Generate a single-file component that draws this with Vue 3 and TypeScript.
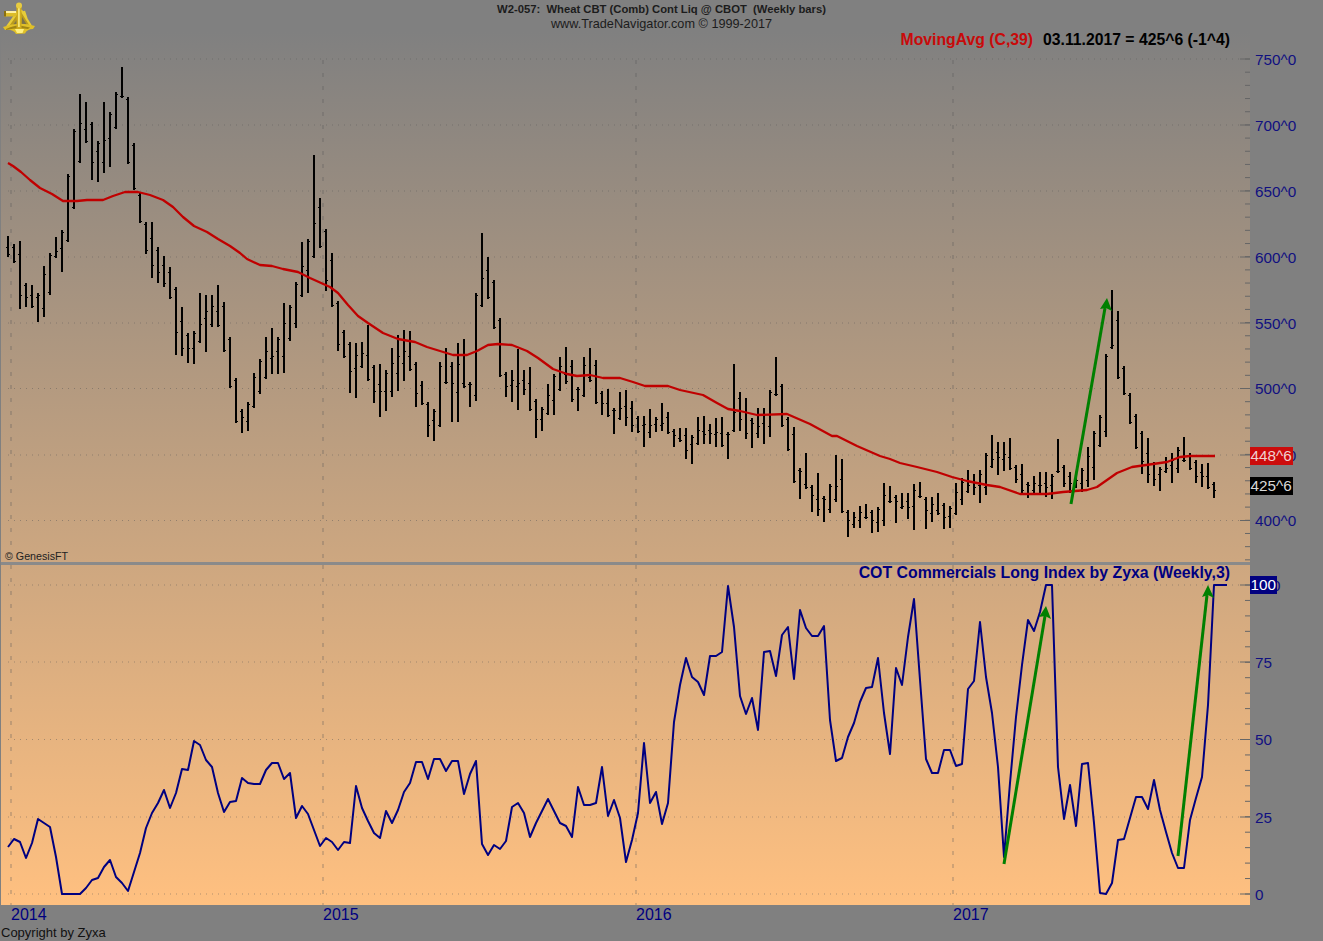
<script setup lang="ts">
// weekly bars as [high, low] in screen px, one bar every 6px from x=8
const bars: [number, number][] = [
  [236,257],[244,263],[241,309],[283,307],[285,308],[293,322],[266,317],[253,295],[237,258],[230,272],
  [174,242],[129,209],[94,163],[102,143],[122,180],[141,182],[102,173],[112,167],[92,129],[67,98],
  [97,164],[143,190],[193,223],[222,254],[222,278],[247,283],[256,287],[267,299],[287,355],[307,356],
  [333,363],[331,364],[293,343],[295,352],[295,327],[285,327],[302,352],[337,388],[378,423],[409,433],
  [402,431],[373,408],[359,394],[337,379],[328,374],[337,374],[303,373],[305,341],[282,328],[242,297],
  [239,293],[155,258],[198,248],[229,291],[253,307],[301,351],[330,358],[342,393],[343,398],[342,368],
  [325,381],[365,403],[364,417],[370,411],[348,397],[335,391],[330,381],[331,371],[362,407],[381,405],
  [402,437],[409,441],[362,427],[348,384],[362,422],[343,422],[339,388],[382,407],[293,401],[233,307],
  [257,299],[280,329],[318,377],[372,397],[370,402],[349,410],[370,395],[367,411],[399,438],[407,431],
  [384,415],[374,415],[357,391],[347,384],[360,402],[387,411],[357,397],[348,382],[360,404],[391,415],
  [389,417],[408,434],[392,420],[390,426],[401,432],[416,433],[416,447],[409,438],[417,432],[403,431],
  [412,434],[429,447],[428,442],[428,459],[435,464],[417,445],[416,444],[424,444],[418,447],[417,447],
  [432,459],[364,432],[392,431],[398,439],[418,448],[408,438],[408,444],[390,437],[357,396],[384,427],
  [417,451],[427,483],[468,499],[453,489],[485,512],[473,516],[496,522],[484,513],[455,502],[459,513],
  [510,537],[512,528],[506,528],[504,519],[510,533],[507,532],[483,526],[486,503],[495,523],[493,509],
  [493,519],[484,530],[482,498],[497,529],[497,522],[493,515],[503,529],[506,528],[483,515],[478,505],
  [470,493],[474,495],[470,503],[453,495],[435,468],[442,475],[442,471],[438,470],[465,483],[464,493],
  [482,498],[476,493],[472,493],[472,497],[474,499],[439,473],[465,487],[472,493],[477,488],[468,492],
  [447,487],[431,480],[415,447],[354,437],[290,349],[311,379],[366,395],[393,424],[414,449],[431,474],
  [438,483],[462,486],[467,491],[457,473],[453,483],[447,473],[437,462],[453,470],[460,483],[464,487],
  [463,489],[482,498],
]

const cot: number[] = [
  847,839,842,858,843,819,823,827,857,894,894,894,894,888,880,878,867,860,877,883,
  891,872,853,828,813,803,790,808,793,769,770,741,745,760,767,793,812,802,801,778,
  783,784,784,770,763,763,779,773,818,806,814,830,846,838,842,850,842,843,786,808,
  821,833,838,811,823,810,792,783,762,762,779,759,759,771,761,761,794,774,761,844,
  855,845,849,841,807,803,813,837,823,811,799,811,823,826,837,787,805,805,803,767,
  816,800,818,862,840,813,743,803,792,824,803,722,685,658,677,682,695,656,656,652,
  586,627,696,714,698,730,652,651,676,635,627,679,610,628,636,636,626,720,761,758,
  737,723,702,688,687,658,713,754,668,685,637,599,680,759,773,773,750,750,766,764,
  689,681,622,677,713,767,857,783,717,665,620,631,612,585,585,767,819,785,826,764,
  763,823,893,894,883,840,839,818,797,797,809,780,810,832,853,868,868,820,798,777,
  705,585,
]

const ma = '8,163 13,166 21,172 30,180 40,188 52,194 63,201 77,201 87,200 103,200 113,196 125,192 138,192 150,195 163,200 173,207 183,217 194,226 207,232 218,239 230,246 240,253 247,259 260,265 272,266 283,269 298,272 310,278 330,287 338,293 348,305 358,316 368,323 383,333 398,339 415,342 427,347 440,351 453,355 467,355 477,351 488,345 498,344 512,345 527,351 538,358 553,369 567,374 577,376 590,375 603,378 620,378 633,382 645,386 668,386 680,390 703,395 717,403 728,409 740,411 757,415 787,414 810,424 832,436 837,436 857,446 880,456 890,459 900,463 917,467 937,472 952,477 967,481 987,485 1000,487 1020,494 1047,494 1063,492 1087,490 1097,487 1107,480 1117,473 1132,467 1167,462 1180,457 1190,456 1215,456'

const barX = (i: number) => 8 + 6 * i
const clamp = (v: number, a: number, b: number) => Math.min(b, Math.max(a, v))

const stemPath = bars.map(([hi, lo], i) => `M${barX(i)} ${hi}V${lo}`).join('')

// open/close ticks aren't readable one by one, so they follow the neighbouring bars
const tickPath = bars.map(([hi, lo], i) => {
  const x = barX(i)
  const prev = bars[i - 1] ?? bars[i]
  const next = bars[i + 1] ?? bars[i]
  const open = Math.round(clamp((prev[0] + prev[1]) / 2, hi + 2, lo - 2)) + 0.5
  const close = Math.round(clamp((next[0] + next[1]) / 2, hi + 2, lo - 2)) + 0.5
  return `M${x - 2} ${open}H${x}M${x} ${close}H${x + 2}`
}).join('')

const cotPoints = cot.map((y, i) => `${barX(i)},${y}`).join(' ') + ' 1227,585'

const years = [
  { label: '2014', x: 11 },
  { label: '2015', x: 323 },
  { label: '2016', x: 636 },
  { label: '2017', x: 953 },
]

const priceLevels = [
  { label: '750^0', y: 59 },
  { label: '700^0', y: 125 },
  { label: '650^0', y: 191 },
  { label: '600^0', y: 257 },
  { label: '550^0', y: 323 },
  { label: '500^0', y: 388.5 },
  { label: '450^0', y: 455 },
  { label: '400^0', y: 520.5 },
]
const cotLevels = [
  { label: '100', y: 585 },
  { label: '75', y: 662 },
  { label: '50', y: 739.5 },
  { label: '25', y: 817 },
  { label: '0', y: 894 },
]

const priceMinor = Array.from({ length: 39 }, (_, i) => 59 + i * 13.18).filter((y) => y < 562)
const cotMinor = Array.from({ length: 21 }, (_, i) => 585 + i * 15.45)
</script>

<template>
  <div class="chart">
    <div class="head">
      <svg class="logo" viewBox="0 0 36 36" width="36" height="36">
        <path d="M19 9 L32 26 L7 27 Z" fill="#b89a1e" />
        <path d="M19 17 L13 25 L18 25 Z M22 17 L21.500 25 L27 25 Z" fill="#7c7248" />
        <path d="M19 10 L7 27 M21 10 L31 26 M24 11 L27 20" fill="none" stroke="#e8cc38" stroke-width="2.200" />
        <path d="M3 27 Q19 21 35 26 L33 29 Q27 29 25 33.500 L16 34 Q13 29 5 30 Z" fill="#e0c028" />
        <path d="M6 29 Q14 25 20 25.500 L30 27.500 L28 29 Q18 27 6 30 Z" fill="#a08414" />
        <path d="M15 29 L24 29 L22.500 33 L17 33 Z" fill="#fff080" />
        <rect x="4" y="11" width="12" height="5.500" fill="#dcbc28" />
        <rect x="4" y="11" width="12" height="2" fill="#fff0a0" />
        <rect x="4" y="11" width="2" height="5.500" fill="#8a7010" />
        <rect x="16.500" y="5" width="5" height="24" fill="#d0ac1c" />
        <rect x="18" y="7" width="1.800" height="20" fill="#f6e678" />
        <circle cx="19" cy="5.500" r="3" fill="#e8cc40" />
      </svg>
      <div class="title">W2-057:&nbsp; Wheat CBT (Comb) Cont Liq @ CBOT&nbsp; (Weekly bars)</div>
      <div class="site">www.TradeNavigator.com © 1999-2017</div>
    </div>

    <div class="middle">
      <div class="plot">
        <div class="pane price-pane">
          <svg viewBox="0 32 1250 530" width="1250" height="530">
            <g class="grid-h">
              <line v-for="l in priceLevels" :key="l.label" x1="8" x2="1240" :y1="l.y" :y2="l.y" />
            </g>
            <g class="grid-v">
              <line v-for="yr in years" :key="yr.label" :x1="yr.x" :x2="yr.x" y1="60" y2="562" />
            </g>
            <g class="tick">
              <line v-for="l in priceLevels" :key="l.label" x1="1240" x2="1250" :y1="l.y" :y2="l.y" />
              <line v-for="y in priceMinor" :key="y" x1="1245" x2="1250" :y1="y" :y2="y" />
            </g>
            <path class="bars" :d="stemPath" />
            <path class="bar-ticks" :d="tickPath" />
            <polyline class="ma" :points="ma" />
            <g class="arrow">
              <line x1="1071" y1="504" x2="1105" y2="308" />
              <path d="M1107 298 L1112 311 L1106 308 L1100 309 Z" />
            </g>
          </svg>
          <div class="legend">
            <span class="ma-name">MovingAvg (C,39)</span>
            <span>03.11.2017 = 425^6 (-1^4)</span>
          </div>
          <div class="genesis">© GenesisFT</div>
        </div>
        <div class="divider"></div>
        <div class="pane cot-pane">
          <svg viewBox="0 565 1250 340" width="1250" height="340">
            <g class="grid-h">
              <line v-for="l in cotLevels" :key="l.label" x1="8" x2="1240" :y1="l.y" :y2="l.y" />
            </g>
            <g class="grid-v">
              <line v-for="yr in years" :key="yr.label" :x1="yr.x" :x2="yr.x" y1="565" y2="905" />
            </g>
            <g class="tick">
              <line v-for="l in cotLevels" :key="l.label" x1="1240" x2="1250" :y1="l.y" :y2="l.y" />
              <line v-for="y in cotMinor" :key="y" x1="1245" x2="1250" :y1="y" :y2="y" />
            </g>
            <polyline class="cot" :points="cotPoints" />
            <g class="arrow">
              <line x1="1004" y1="864" x2="1045" y2="616" />
              <path d="M1046 606 L1051 619 L1045 616 L1039 617 Z" />
              <line x1="1178" y1="856" x2="1207" y2="595" />
              <path d="M1208 585 L1214 598 L1208 595 L1202 597 Z" />
            </g>
          </svg>
          <div class="legend cot-legend">COT Commercials Long Index by Zyxa (Weekly,3)</div>
        </div>
      </div>

      <div class="scale">
        <svg viewBox="1250 32 73 530" width="73" height="530">
          <text v-for="l in priceLevels" :key="l.label" x="1255" :y="l.y + 5.5">{{ l.label }}</text>
          <rect x="1250" y="447" width="43" height="18" fill="#cc0c0c" />
          <text class="badge-red" x="1250.5" y="461">448^6</text>
          <rect x="1250" y="477" width="43" height="18" fill="#000" />
          <text class="badge-black" x="1250.5" y="491">425^6</text>
        </svg>
        <div class="scale-gap"></div>
        <svg viewBox="1250 565 73 340" width="73" height="340">
          <text x="1255" :y="590.5">100</text>
          <text v-for="l in cotLevels.slice(1)" :key="l.label" x="1255" :y="l.y + 5.5">{{ l.label }}</text>
          <rect x="1250" y="576" width="27" height="18" fill="#000080" />
          <text class="badge-blue" x="1250.5" y="590">100</text>
        </svg>
      </div>
    </div>

    <div class="foot">
      <svg viewBox="0 905 1323 20" width="1323" height="20">
        <text v-for="yr in years" :key="yr.label" :x="yr.x" y="920">{{ yr.label }}</text>
      </svg>
      <div class="copy">Copyright by Zyxa</div>
    </div>
  </div>
</template>

<style scoped>
.chart {
  width: 1323px; height: 941px; background: #808080; overflow: hidden;
  font-family: "Liberation Sans", Arial, sans-serif; color: #000;
}
.head {
  position: relative; height: 32px; box-sizing: border-box; padding-top: 2px;
  display: flex; flex-direction: column; align-items: center;
}
.logo { position: absolute; left: 0; top: 0; }
.title { font-size: 11.25px; font-weight: 700; line-height: 14px; color: #1c1c1c; }
.site { font-size: 12.7px; line-height: 15px; padding-top: 1px; color: #1c1c1c; }

.middle { display: flex; height: 873px; }
.plot {
  width: 1250px; display: flex; flex-direction: column;
  border-left: 1px solid #808080; box-sizing: border-box;
  background: linear-gradient(#808080, #ffc080);
}
.pane { position: relative; margin-left: -1px; }
.pane svg { display: block; }
.price-pane { height: 530px; }
.cot-pane { height: 340px; }
.divider { height: 3px; background: #8a8a8a; }

.legend {
  position: absolute; right: 20px; top: -1px; display: flex; gap: 10px;
  font-size: 15.75px; font-weight: 700; line-height: 18px;
}
.ma-name { color: #c80a0a; }
.cot-legend { top: -1px; font-size: 15.87px; color: #000080; }
.genesis { position: absolute; left: 5px; bottom: -1px; font-size: 10.7px; line-height: 14px; color: #222; }

.grid-h line { stroke: #555; stroke-opacity: 0.45; stroke-width: 1; stroke-dasharray: 1 5; }
.grid-v line { stroke: #555; stroke-opacity: 0.5; stroke-width: 1; stroke-dasharray: 4 9; }
.tick line { stroke: #666; stroke-width: 1; }
.bars { fill: none; stroke: #000; stroke-width: 2; shape-rendering: crispEdges; }
.bar-ticks { fill: none; stroke: #000; stroke-width: 1; shape-rendering: crispEdges; }
.ma { fill: none; stroke: #c00000; stroke-width: 2.3; stroke-linejoin: round; }
.cot { fill: none; stroke: #000080; stroke-width: 2; stroke-linejoin: round; }
.arrow line { stroke: #008000; stroke-width: 3; }
.arrow path { fill: #008000; }

.scale { width: 73px; }
.scale svg { display: block; }
.scale text { font-size: 15.3px; fill: #101080; }
.scale text.badge-red { fill: #f0d0d0; }
.scale text.badge-black { fill: #d8d8d8; }
.scale text.badge-blue { fill: #fff; }
.scale-gap { height: 3px; }

.foot svg { display: block; }
.foot text { font-size: 16px; fill: #000080; }
.copy { font-size: 13px; line-height: 16px; padding-left: 1px; color: #111; }
</style>
